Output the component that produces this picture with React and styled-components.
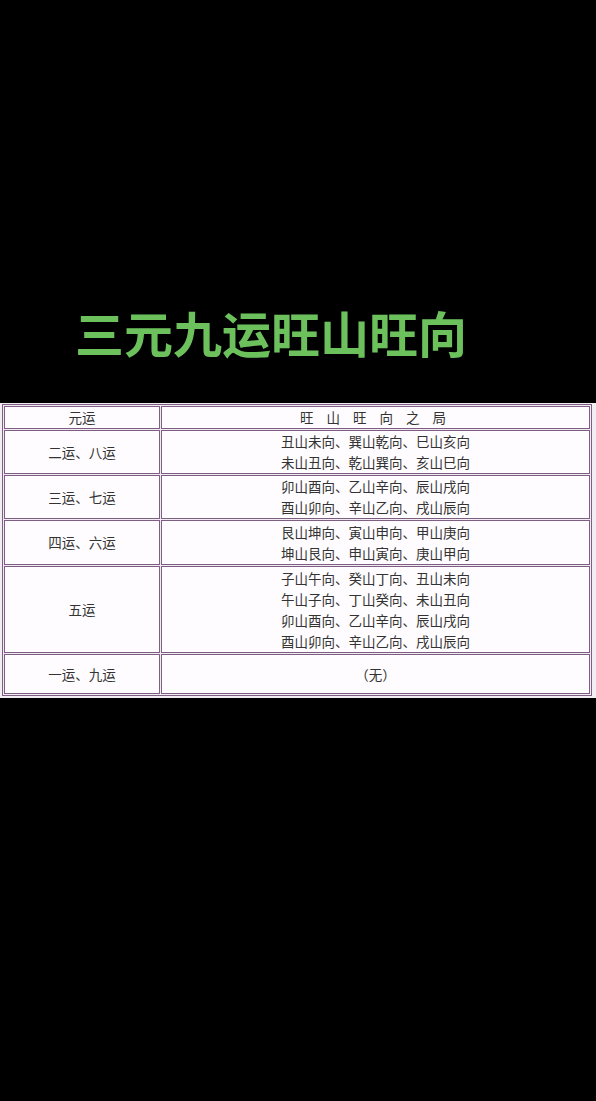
import React from "react";
import styled, { createGlobalStyle } from "styled-components";

const Global = createGlobalStyle`
  html, body { margin: 0; padding: 0; background: #000; }
  body { font-family: "Noto Sans CJK SC", "Noto Sans", sans-serif; }
`;

const Page = styled.div`
  width: 596px;
  height: 1101px;
  background: #000;
  display: flex;
  flex-direction: column;
  overflow: hidden;
`;

const Title = styled.h1`
  margin: 302px 0 0 0;
  padding-left: 75px;
  font-size: 49px;
  line-height: 60px;
  font-weight: 700;
  color: #6cc15c;
  letter-spacing: 0;
  white-space: nowrap;
`;

const Frame = styled.div`
  margin-top: 41px;
  background: #f3eef4;
  padding: 1px 4px 2px 2px;
`;

const Table = styled.table`
  width: 100%;
  border: 1px solid #7e5e82;
  border-collapse: separate;
  border-spacing: 1px;
  background: #f1ebf2;
  table-layout: fixed;
  color: #333;
  font-size: 13.5px;
`;

const Cell = styled.td`
  border: 1px solid #7e5e82;
  background: #fefcfe;
  text-align: center;
  vertical-align: middle;
  padding: 0;
  height: ${(p) => p.$h}px;
  line-height: 21px;
`;

const HeadCell = styled(Cell)`
  letter-spacing: ${(p) => p.$ls || 0}px;
`;

const Line = styled.div`
  white-space: nowrap;
`;

const rows = [
  { era: "二运、八运", h: 42, lines: ["丑山未向、巽山乾向、巳山亥向", "未山丑向、乾山巽向、亥山巳向"] },
  { era: "三运、七运", h: 42, lines: ["卯山酉向、乙山辛向、辰山戌向", "酉山卯向、辛山乙向、戌山辰向"] },
  { era: "四运、六运", h: 43, lines: ["艮山坤向、寅山申向、甲山庚向", "坤山艮向、申山寅向、庚山甲向"] },
  {
    era: "五运",
    h: 85,
    lines: [
      "子山午向、癸山丁向、丑山未向",
      "午山子向、丁山癸向、未山丑向",
      "卯山酉向、乙山辛向、辰山戌向",
      "酉山卯向、辛山乙向、戌山辰向",
    ],
  },
  { era: "一运、九运", h: 38, lines: ["（无）"] },
];

export default function App() {
  return (
    <Page>
      <Global />
      <Title>三元九运旺山旺向</Title>
      <Frame>
        <Table>
          <colgroup>
            <col style={{ width: "156px" }} />
            <col />
          </colgroup>
          <tbody>
            <tr>
              <HeadCell $h={21}>元运</HeadCell>
              <HeadCell $h={21} $ls={5}>旺 山 旺 向 之 局</HeadCell>
            </tr>
            {rows.map((r) => (
              <tr key={r.era}>
                <Cell $h={r.h}>{r.era}</Cell>
                <Cell $h={r.h}>
                  {r.lines.map((l, i) => (
                    <Line key={i}>{l}</Line>
                  ))}
                </Cell>
              </tr>
            ))}
          </tbody>
        </Table>
      </Frame>
    </Page>
  );
}
